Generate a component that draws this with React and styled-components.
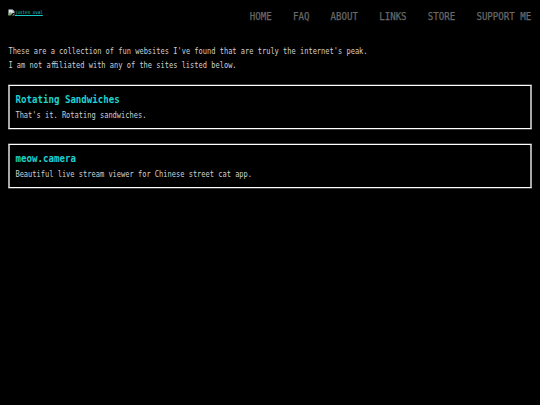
import React from 'react';
import styled, { createGlobalStyle } from 'styled-components';

const Global = createGlobalStyle`
  * { box-sizing: border-box; }
  html, body { margin: 0; background: #000; }
  body { font-family: "DejaVu Sans Mono", monospace; color: #d0d0d0; overflow: hidden; }
`;
const Page = styled.div`
  min-height: 405px;
  padding: 0 8px;
`;
const Header = styled.header`
  display: flex;
  justify-content: space-between;
  height: 43.6px;
  padding: 8px 0.8px 0 0;
`;
const Logo = styled.a`
  display: flex;
  height: 8px;
  align-items: center;
  color: #17c9c9;
  text-decoration: underline;
  white-space: nowrap;
`;
const LogoText = styled.span`
  font-size: 5px;
  line-height: 6px;
  transform: scaleX(0.84);
  transform-origin: left;
`;
const Nav = styled.nav`
  display: flex;
  gap: 24.4px;
  height: 17px;
  transform: scaleX(0.868);
  transform-origin: right;
`;
const NavLink = styled.a`
  color: #686868;
  font-size: 10.5px;
  line-height: 16px;
  white-space: nowrap;
  -webkit-text-stroke: 0.25px #686868;
`;
const Line = styled.p`
  margin: 0;
  padding-left: 0.5px;
  width: max-content;
  font-size: 8.4px;
  line-height: 14.5px;
  white-space: nowrap;
  transform: scaleX(0.838);
  transform-origin: left;
`;
const Ligature = styled.span`
  letter-spacing: -2.53px;
`;
const List = styled.main`
  display: grid;
  gap: 15px;
  margin-top: 12.4px;
`;
const Card = styled.section`
  height: 44px;
  border: 2px solid #fff;
  border-color: #fff #a8a8a8;
  border-width: 1px 2px;
  box-shadow: 0 1px #3c3c3c, 0 -1px #3c3c3c;
  padding: 6px 5.4px;
`;
const Title = styled.h2`
  margin: 0;
  padding-left: 0.7px;
  width: max-content;
  color: #1cd3d0;
  font-size: 10.2px;
  line-height: 16px;
  transform: scaleX(0.893);
  transform-origin: left;
`;

const links = ['HOME', 'FAQ', 'ABOUT', 'LINKS', 'STORE', 'SUPPORT ME'];
const sites = [
  { title: 'Rotating Sandwiches', text: "That's it. Rotating sandwiches." },
  { title: 'meow.camera', text: 'Beautiful live stream viewer for Chinese street cat app.' },
];

const BrokenImage = () => (
  <svg width="7" height="7" viewBox="0 0 14 14">
    <path d="M1 1h8l4 4v4l-3-2-3 4-2-2-4 4z" fill="#dfe7ee" />
    <path d="M1 10l4-4 3 3-3 4H1z" fill="#7aa874" />
    <path d="M9 1v4h4M8 13l3-3 2 1v2z" fill="#9a9a9a" />
  </svg>
);

export default function App() {
  return (
    <Page>
      <Global />
      <Header>
        <Logo><BrokenImage /><LogoText>justen oval</LogoText></Logo>
        <Nav>{links.map((l) => <NavLink key={l}>{l}</NavLink>)}</Nav>
      </Header>
      <Line>These are a collection of fun websites I've found that are truly the internet's peak.</Line>
      <Line>I am not a<Ligature>ff</Ligature>iliated with any of the sites listed below.</Line>
      <List>
        {sites.map((s) => (
          <Card key={s.title}>
            <Title>{s.title}</Title>
            <Line>{s.text}</Line>
          </Card>
        ))}
      </List>
    </Page>
  );
}
